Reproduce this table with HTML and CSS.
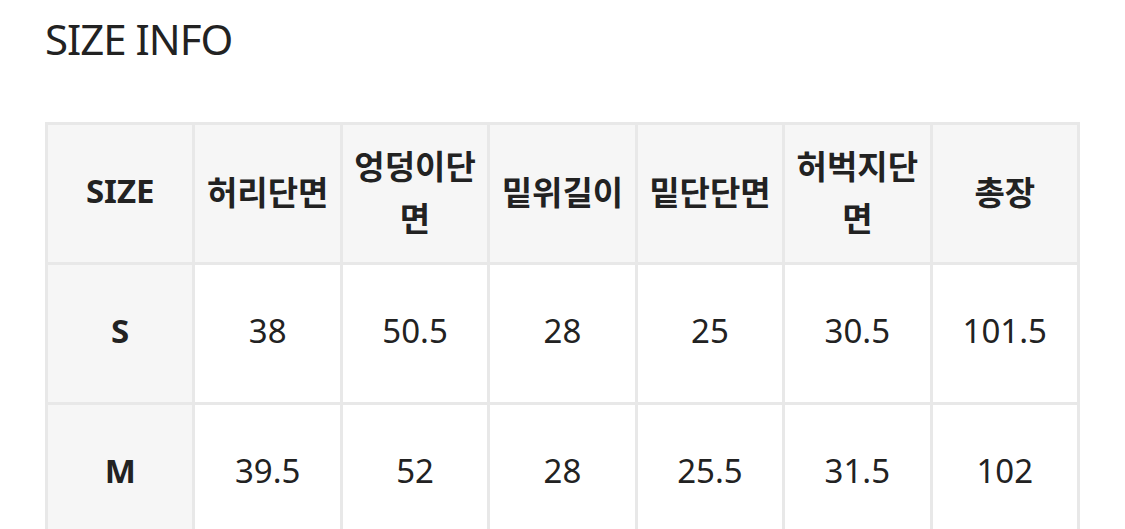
FILE: index.html
```html
<!DOCTYPE html>
<html lang="ko">
<head>
<meta charset="utf-8">
<title>SIZE INFO</title>
<link rel="stylesheet" href="styles.css">
</head>
<body>
<main class="page">
  <h2 class="title">SIZE INFO</h2>
  <table class="size-table">
    <thead>
      <tr>
        <th>SIZE</th>
        <th>허리단면</th>
        <th>엉덩이단면</th>
        <th>밑위길이</th>
        <th>밑단단면</th>
        <th>허벅지단면</th>
        <th>총장</th>
      </tr>
    </thead>
    <tbody>
      <tr>
        <th>S</th>
        <td>38</td>
        <td>50.5</td>
        <td>28</td>
        <td>25</td>
        <td>30.5</td>
        <td>101.5</td>
      </tr>
      <tr>
        <th>M</th>
        <td>39.5</td>
        <td>52</td>
        <td>28</td>
        <td>25.5</td>
        <td>31.5</td>
        <td>102</td>
      </tr>
    </tbody>
  </table>
</main>
</body>
</html>
```

FILE: styles.css
```css
html, body {
  margin: 0;
  padding: 0;
  background: #ffffff;
}

body {
  font-family: "Noto Sans", "Noto Sans CJK KR", sans-serif;
  color: #222222;
}

.page {
  padding: 9px 45px 0 45px;
}

.title {
  margin: 0;
  font-size: 42px;
  line-height: 59px;
  font-weight: 400;
  color: #222222;
  letter-spacing: -1px;
}

.size-table {
  margin-top: 54px;
  width: 1035px;
  table-layout: fixed;
  border-collapse: collapse;
  border: 3px solid #e8e8e8;
}

.size-table th,
.size-table td {
  border: 3px solid #e8e8e8;
  height: 131px;
  padding: 0 8px 6px 8px;
  text-align: center;
  vertical-align: middle;
  font-size: 33px;
  line-height: 46px;
}

.size-table th {
  background: #f6f6f6;
  font-weight: 700;
  font-family: "Noto Sans", "Noto Sans CJK KR", sans-serif;
}

.size-table thead th {
  font-family: "Noto Sans CJK KR", "Noto Sans", sans-serif;
  line-height: 52px;
}

.size-table thead th:first-child {
  font-family: "Noto Sans", "Noto Sans CJK KR", sans-serif;
}

.size-table td {
  background: #ffffff;
  font-weight: 400;
  color: #222222;
}
```
